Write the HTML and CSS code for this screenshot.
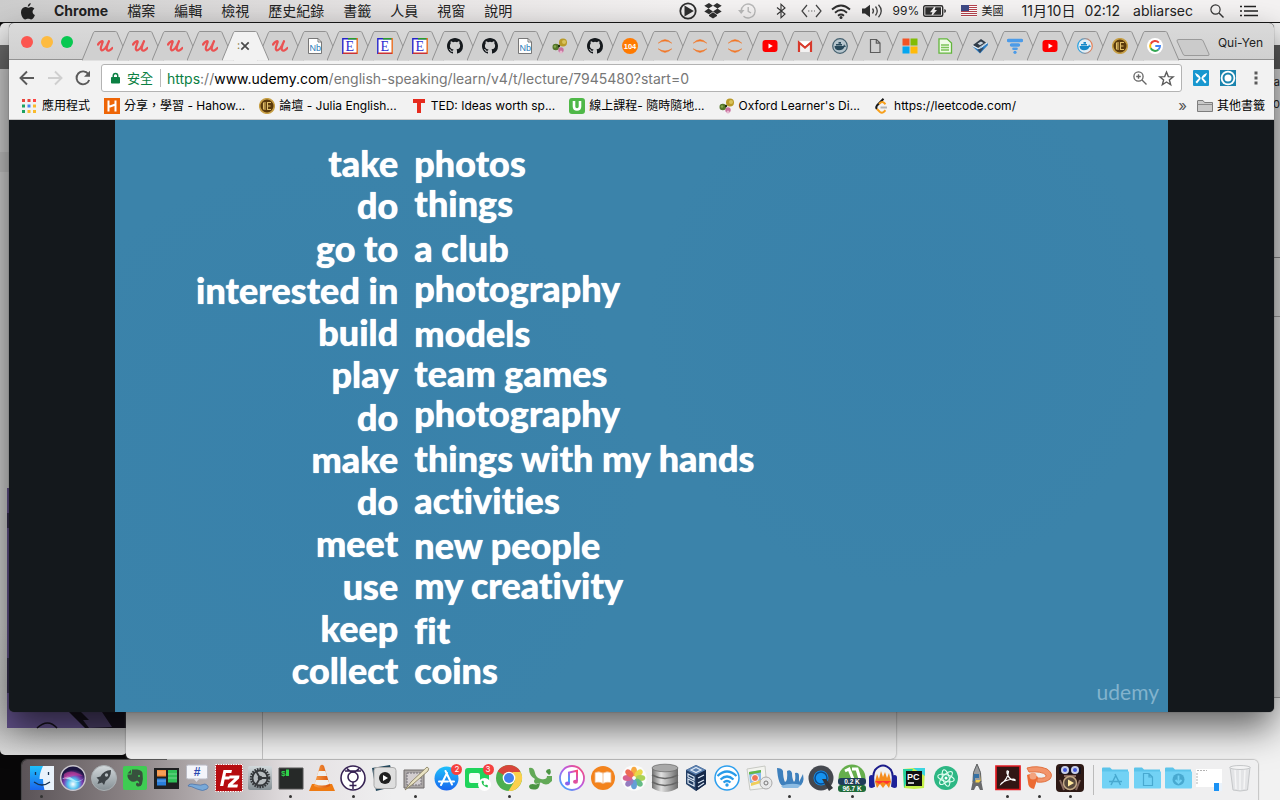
FILE: index.html
```html
<!DOCTYPE html>
<html lang="zh-Hant">
<head>
<meta charset="utf-8">
<title>Chrome</title>
<link rel="stylesheet" href="styles.css">
</head>
<body>
<svg class="defs" aria-hidden="true">
  <defs>
    <linearGradient id="gCone" x1="0" x2="1"><stop offset="0" stop-color="#f9a04a"/><stop offset="1" stop-color="#d9540a"/></linearGradient>
    <linearGradient id="gBlue" x1="0" x2="0" y1="0" y2="1"><stop offset="0" stop-color="#1ec0fb"/><stop offset="1" stop-color="#1a66ee"/></linearGradient>
    <linearGradient id="gGrey" x1="0" x2="0" y1="0" y2="1"><stop offset="0" stop-color="#d3d9dc"/><stop offset="1" stop-color="#858f94"/></linearGradient>
    <linearGradient id="gDisk" x1="0" x2="1"><stop offset="0" stop-color="#6f6f6f"/><stop offset=".35" stop-color="#e2e2e2"/><stop offset="1" stop-color="#6a6a6a"/></linearGradient>
    <linearGradient id="gTunes" x1="0" x2="1" y1="1" y2="0"><stop offset="0" stop-color="#28b8ff"/><stop offset=".5" stop-color="#b45bea"/><stop offset="1" stop-color="#ff4a70"/></linearGradient>
    <linearGradient id="gWhale" x1="0" x2="1"><stop offset="0" stop-color="#21a3e8"/><stop offset="1" stop-color="#ef8154"/></linearGradient>
    <radialGradient id="gSiri" cx=".5" cy=".75" r=".7"><stop offset="0" stop-color="#fff"/><stop offset=".3" stop-color="#4fc3f0"/><stop offset=".55" stop-color="#7a3cae"/><stop offset=".85" stop-color="#1b1440"/></radialGradient>
  </defs>
</svg>
<svg class="symbols" aria-hidden="true">
  <symbol id="tab" viewBox="0 0 47 30"><path d="M0 29.500L11.500 1.500Q12 .5 13 .5H33.500Q34.500 .5 35 1.500L47 29.500" stroke="#929292"/></symbol>
  <symbol id="f-u" viewBox="0 0 16 16"><path d="M1 6.500C2.500 4.500 4.500 3 5.500 3.200C6.500 3.500 3.500 8.500 3.800 11C4 13.500 7.500 12.500 10 7.500L12 3.200M12 3.200C10.500 6.500 9.200 10.500 10 12C11 13.500 13.500 12.500 15.500 10" fill="none" stroke="#ea5252" stroke-width="2.200" stroke-linecap="round"/></symbol>
  <symbol id="f-nb" viewBox="0 0 16 16"><path d="M1.500 .5H11L14.500 4V15.500H1.500Z" fill="#fff" stroke="#777"/><path d="M11 .5V4H14.500" fill="none" stroke="#777"/><text x="2.500" y="12.500" font-size="9" class="glyph" fill="#2b7bb9">Nb</text></symbol>
  <symbol id="f-e" viewBox="0 0 16 16"><path d="M0 0H16V16H0Z" fill="#fff"/><path d="M.8 16V.8H15" fill="none" stroke="#2323c8" stroke-width="1.400"/><path d="M6 .8H15" stroke="#2aa02a" stroke-width="1.400"/><path d="M15.200 0V16" stroke="#e86a1c" stroke-width="1.400"/><path d="M1 15.200H15" stroke="#c33" stroke-width="1.400"/><text x="3.500" y="13" font-size="14" font-family="Liberation Serif" fill="#2b2bd0">E</text></symbol>
  <symbol id="f-gh" viewBox="0 0 16 16"><path fill="#15191d" d="M8 0C3.580 0 0 3.580 0 8c0 3.540 2.290 6.530 5.470 7.590.4.070.55-.17.55-.38 0-.19-.01-.82-.01-1.490-2.010.37-2.530-.49-2.690-.94-.09-.23-.48-.94-.82-1.130-.28-.15-.68-.52-.01-.53.63-.01 1.080.58 1.230.82.72 1.210 1.870.87 2.330.66.07-.52.280-.87.510-1.070-1.780-.2-3.640-.89-3.640-3.950 0-.87.310-1.590.82-2.150-.08-.2-.36-1.020.08-2.120 0 0 .67-.21 2.200.82a7.600 7.600 0 0 1 4 0c1.530-1.040 2.200-.82 2.200-.82.440 1.100.16 1.920.08 2.120.51.560.82 1.270.82 2.150 0 3.070-1.870 3.750-3.650 3.950.29.250.54.730.54 1.480 0 1.070-.01 1.930-.01 2.200 0 .21.15.46.55.38A8 8 0 0 0 16 8c0-4.420-3.580-8-8-8Z"/></symbol>
  <symbol id="f-ox" viewBox="0 0 16 16"><circle cx="11" cy="4.500" r="4" fill="#b99a28"/><circle cx="12" cy="4" r="2" fill="#d9c25c"/><circle cx="3.800" cy="9" r="3.300" fill="#55762a"/><circle cx="3" cy="8.500" r="1.300" fill="#87a84d"/><circle cx="9" cy="12" r="2.700" fill="#c86f9d"/><circle cx="9" cy="14" r="1.500" fill="#e6b7cf"/><circle cx="7" cy="8" r="1.200" fill="#233010"/></symbol>
  <symbol id="f-104" viewBox="0 0 16 16"><circle cx="8" cy="8" r="8" fill="#ff7a00"/><text x="8" y="10.800" font-size="7.500" font-weight="900" text-anchor="middle" class="glyph" fill="#fff">104</text></symbol>
  <symbol id="f-ju" viewBox="0 0 16 16"><path d="M1.200 5.200Q8-2 14.800 5.200Q8 1 1.200 5.200ZM1.200 10.800Q8 18 14.800 10.800Q8 15 1.200 10.800Z" fill="#f37726" stroke="#f37726" stroke-width=".5"/></symbol>
  <symbol id="f-yt" viewBox="0 0 16 16"><rect y="2" x=".5" width="15" height="12" rx="3" fill="#f00"/><path d="M6.500 5.500V10.500L10.800 8Z" fill="#fff"/></symbol>
  <symbol id="f-gm" viewBox="0 0 16 16"><path d="M1 3H15V14H1Z" fill="#f2f2f2"/><path d="M2 14V4.500L8 9.500L14 4.500V14" fill="none" stroke="#d8392b" stroke-width="2.200"/><path d="M3 3.500L8 8L13 3.500Z" fill="#fff"/></symbol>
  <symbol id="whale" viewBox="0 0 16 16"><path d="M2.500 8H11Q12 8 12 6.300Q12.800 7 12.900 7.700Q13.800 7.600 14.200 8Q13.500 9 12.400 9Q11 12.300 7 12.300Q2.800 12.300 2.500 8ZM4 6H10V7.500H4ZM6.500 4H9V5.700H6.500Z"/></symbol>
  <symbol id="f-dk" viewBox="0 0 16 16"><circle cx="8" cy="8" r="7.300" fill="#b6c5cd" stroke="#44606f" stroke-width="1.200"/><use href="#whale" fill="#27485a"/></symbol>
  <symbol id="f-dc" viewBox="0 0 16 16"><circle cx="8" cy="8" r="7.300" fill="#e3eef5" stroke="url(#gWhale)" stroke-width="1.200"/><use href="#whale" fill="#1689c9"/></symbol>
  <symbol id="f-doc" viewBox="0 0 16 16"><path d="M3.500 1.500H9.500L13 5V14.500H3.500ZM9.300 1.500V5.200H13" fill="none" stroke="#5c5c5c" stroke-width="1.200"/></symbol>
  <symbol id="f-ms" viewBox="0 0 16 16"><path d="M.5 .5H7.500V7.500H.5Z" fill="#f35325"/><path d="M8.500 .5H15.500V7.500H8.500Z" fill="#81bc06"/><path d="M.5 8.500H7.500V15.500H.5Z" fill="#05a6f0"/><path d="M8.500 8.500H15.500V15.500H8.500Z" fill="#ffba08"/></symbol>
  <symbol id="f-gd" viewBox="0 0 16 16"><path d="M2 .8H10L14.500 5V15.200H2Z" fill="#f0fbe8" stroke="#62b53c" stroke-width="1.300"/><path d="M4 7H12M4 9.500H12M4 12H12" stroke="#7cc45a" stroke-width="1.300"/></symbol>
  <symbol id="f-ha" viewBox="0 0 16 16"><path d="M1 7L9 1L14 4.500L6 10Z" fill="#2f3b48"/><path d="M5.500 5.500L9 3.500L11.500 5L8 7.200Z" fill="#c9d3dc"/><path d="M0 8L6 11L15.500 4.500L16 7L8 15.500Z" fill="#2f7fc4"/><path d="M.5 7.800L7 11L15.500 4.800" fill="none" stroke="#e6edf3" stroke-width="1"/><path d="M5.500 11.500L12 9.500L8 15Z" fill="#334a62"/></symbol>
  <symbol id="f-tf" viewBox="0 0 16 16"><path d="M1.500 2.500H14.500M4.500 7H11.500" stroke="#4c9be8" stroke-width="3.400" stroke-linecap="round"/><path d="M6.500 10.700H9.500" stroke="#4c9be8" stroke-width="2.600" stroke-linecap="round"/><circle cx="8" cy="14.300" r="1.600" fill="#4c9be8"/></symbol>
  <symbol id="f-je" viewBox="0 0 16 16"><circle cx="8" cy="8" r="7.300" fill="#5a3a0c" stroke="#c79f45" stroke-width="1.600"/><path d="M6 4V12M4.500 4.500V11.500M8.500 4V12M8.500 4.500H12M8.500 8H11.500M8.500 11.500H12" stroke="#e3c16a" stroke-width="1.100"/></symbol>
  <symbol id="f-g" viewBox="0 0 16 16"><circle cx="8" cy="8" r="8" fill="#fff"/><path d="M11.800 4.600A5 5 0 0 0 3.700 5.700" fill="none" stroke="#ea4335" stroke-width="2"/><path d="M3.700 5.700A5 5 0 0 0 3.700 10.300" fill="none" stroke="#fbbc05" stroke-width="2"/><path d="M3.700 10.300A5 5 0 0 0 11.300 11.700" fill="none" stroke="#34a853" stroke-width="2"/><path d="M11.300 11.700A5 5 0 0 0 13 8H8.300" fill="none" stroke="#4285f4" stroke-width="2"/></symbol>
  <symbol id="folder" viewBox="0 0 28 28"><path d="M1 4.500Q1 3.500 2 3.500H9L11 5.500H27V10H1Z" fill="#5cc4ea"/><path d="M1 7.500H28V23.500Q28 24.500 27 24.500H2Q1 24.500 1 23.500Z" fill="#72d2f5"/></symbol>
</svg>

<div class="desktop">
  <header class="menubar">
    <nav class="menus">
      <svg class="apple" viewBox="0 0 14 17" width="14" height="17"><path fill="#222" d="M9.700 0C9.800 1.500 8.600 3.600 6.800 3.700C6.600 2.100 8.200.2 9.700 0ZM7.100 4.700C7.800 4.700 8.700 3.900 10.100 3.900C11.500 3.900 12.700 4.600 13.400 5.700C10.700 7.300 11.100 10.900 13.900 12C13.300 13.800 11.800 16.400 10.200 16.500C9 16.500 8.600 15.800 7.200 15.800C5.700 15.800 5.300 16.500 4.200 16.500C2.100 16.400 0 12.500 0 9.300C0 6 2.100 4.100 4.100 4C5.400 4 6.500 4.700 7.100 4.700Z"/></svg>
      <a href="#" class="app">Chrome</a><a href="#">檔案</a><a href="#">編輯</a><a href="#">檢視</a><a href="#">歷史紀錄</a><a href="#">書籤</a><a href="#">人員</a><a href="#">視窗</a><a href="#">說明</a>
    </nav>
    <div class="status">
      <svg class="play" viewBox="0 0 18 18" width="18" height="18"><circle cx="9" cy="9" r="7.700" fill="none" stroke="#2f2f2f" stroke-width="1.800"/><path d="M5.500 3.500V14.500L14.800 9Z" fill="#2f2f2f"/></svg>
      <svg class="dropbox" viewBox="0 0 18 16" width="18" height="16"><path fill="#2f2f2f" d="M5 0L9 2.800L4.500 5.600L.3 2.800ZM13 0L17.700 2.800L13.500 5.600L9 2.800ZM.3 8.400L4.500 5.600L9 8.400L5 11.200ZM17.700 8.400L13.500 5.600L9 8.400L13 11.200ZM9 9.300L13 12.100V13L9 15.500L5 13V12.100Z"/></svg>
      <svg class="tm" viewBox="0 0 18 16" width="18" height="16"><path d="M3.200 8A7 7 0 1 1 5.500 13.200M10.200 4V8.300L13 10" fill="none" stroke="#b9b9b9" stroke-width="1.400"/><path d="M0 7H6.500L3.200 11Z" fill="#b9b9b9"/></svg>
      <svg class="bt" viewBox="0 0 10 16" width="10" height="16"><path d="M1 4.500L9 11L5 14.800V1.200L9 5L1 11.500" fill="none" stroke="#333" stroke-width="1.100"/></svg>
      <svg class="net" viewBox="0 0 21 12" width="21" height="12"><path d="M6 0L1 6L6 12M15 0L20 6L15 12" fill="none" stroke="#444" stroke-width="1.200"/><path d="M7 6H14" stroke="#999" stroke-dasharray="1.400 1.600" stroke-width="1.400"/></svg>
      <svg class="wifi" viewBox="0 0 20 15" width="20" height="15"><path d="M1 5.500Q10-2.500 19 5.500M4 8.700Q10 3.500 16 8.700M7 11.700Q10 9.300 13 11.700" fill="none" stroke="#2f2f2f" stroke-width="1.900"/><circle cx="10" cy="13.500" r="1.500" fill="#2f2f2f"/></svg>
      <svg class="vol" viewBox="0 0 21 14" width="21" height="14"><path d="M0 4.500H3L8 .8V13.200L3 9.500H0Z" fill="#2f2f2f"/><path d="M10.500 4.500Q12.500 7 10.500 9.500M13.500 2.500Q17 7 13.500 11.500M16.500 .8Q22 7 16.500 13.200" fill="none" stroke="#444" stroke-width="1.300"/></svg>
      <span class="pct">99%</span>
      <svg class="bat" viewBox="0 0 23 12" width="23" height="12"><rect x=".7" y=".7" width="19" height="10.600" rx="1.500" fill="none" stroke="#2f2f2f" stroke-width="1.400"/><path d="M21.300 4V8Q23 7.500 23 6T21.300 4Z" fill="#2f2f2f"/><path d="M2.300 2.300H11L7 7.200H9.500L8.500 9.700H2.300ZM18 2.300H12.500L11.500 5H14L10 9.700H18Z" fill="#2f2f2f"/></svg>
      <svg class="flag" viewBox="0 0 16 12" width="16" height="12"><path fill="#fff" d="M0 0H16V12H0Z"/><path d="M0 .5H16M0 2.500H16M0 4.500H16M0 6.500H16M0 8.500H16M0 10.500H16" stroke="#b5424d"/><path fill="#3f4a86" d="M0 0H8V6H0Z"/></svg>
      <span class="ime">美國</span>
      <span class="date">11月10日</span><span class="time">02:12</span>
      <span class="user">abliarsec</span>
      <svg class="search" viewBox="0 0 14 14" width="14" height="14"><circle cx="5.500" cy="5.500" r="4.600" fill="none" stroke="#333" stroke-width="1.200"/><path d="M9 9L13.500 13.500" stroke="#333" stroke-width="1.400"/></svg>
      <svg class="list" viewBox="0 0 18 12" width="18" height="12"><path d="M4 1.500H16M4 6H18M4 10.500H18M0 1.500H2M0 6H2M0 10.500H2" stroke="#222" stroke-width="1.700"/></svg>
    </div>
  </header>

  <div class="back-left">
    <svg class="photo" viewBox="0 0 119 240" preserveAspectRatio="none"><path d="M0 0H119V240H0Z" fill="#63528c"/><path d="M0 25H2V40H0ZM0 170H3V205H0Z" fill="#37304f"/><path d="M62 224H119V240H78Z" fill="#15111c"/><path d="M74 224H95L105 239L82 240L76 232H82Z" fill="#4b3f68"/><path d="M30 240Q41 230 50 240" fill="none" stroke="#16121c" stroke-width="1.500"/></svg>
  </div>
  <div class="back-right"><span class="clip">a</span><span class="clip">0</span></div>
  <div class="back-mid"></div>

  <main class="window">
    <div class="tabstrip">
      <div class="lights"><button aria-label="Close" class="red"></button><button aria-label="Minimise" class="amber"></button><button aria-label="Zoom" class="green"></button></div>
      <div class="tabs">
        <button class="tab"><svg class="shape"><use href="#tab"/></svg><svg class="fav"><use href="#f-u"/></svg></button>
        <button class="tab"><svg class="shape"><use href="#tab"/></svg><svg class="fav"><use href="#f-u"/></svg></button>
        <button class="tab"><svg class="shape"><use href="#tab"/></svg><svg class="fav"><use href="#f-u"/></svg></button>
        <button class="tab"><svg class="shape"><use href="#tab"/></svg><svg class="fav"><use href="#f-u"/></svg></button>
        <button class="tab active"><svg class="shape"><use href="#tab"/></svg><span class="cut">:</span><svg class="x" viewBox="0 0 8 8"><path d="M.3 .3L7.700 7.700M7.700 .3L.3 7.700" stroke="#4a4a4a" stroke-width="1.700"/></svg></button>
        <button class="tab"><svg class="shape"><use href="#tab"/></svg><svg class="fav"><use href="#f-u"/></svg></button>
        <button class="tab"><svg class="shape"><use href="#tab"/></svg><svg class="fav"><use href="#f-nb"/></svg></button>
        <button class="tab"><svg class="shape"><use href="#tab"/></svg><svg class="fav"><use href="#f-e"/></svg></button>
        <button class="tab"><svg class="shape"><use href="#tab"/></svg><svg class="fav"><use href="#f-e"/></svg></button>
        <button class="tab"><svg class="shape"><use href="#tab"/></svg><svg class="fav"><use href="#f-e"/></svg></button>
        <button class="tab"><svg class="shape"><use href="#tab"/></svg><svg class="fav"><use href="#f-gh"/></svg></button>
        <button class="tab"><svg class="shape"><use href="#tab"/></svg><svg class="fav"><use href="#f-gh"/></svg></button>
        <button class="tab"><svg class="shape"><use href="#tab"/></svg><svg class="fav"><use href="#f-nb"/></svg></button>
        <button class="tab"><svg class="shape"><use href="#tab"/></svg><svg class="fav"><use href="#f-ox"/></svg></button>
        <button class="tab"><svg class="shape"><use href="#tab"/></svg><svg class="fav"><use href="#f-gh"/></svg></button>
        <button class="tab"><svg class="shape"><use href="#tab"/></svg><svg class="fav"><use href="#f-104"/></svg></button>
        <button class="tab"><svg class="shape"><use href="#tab"/></svg><svg class="fav"><use href="#f-ju"/></svg></button>
        <button class="tab"><svg class="shape"><use href="#tab"/></svg><svg class="fav"><use href="#f-ju"/></svg></button>
        <button class="tab"><svg class="shape"><use href="#tab"/></svg><svg class="fav"><use href="#f-ju"/></svg></button>
        <button class="tab"><svg class="shape"><use href="#tab"/></svg><svg class="fav"><use href="#f-yt"/></svg></button>
        <button class="tab"><svg class="shape"><use href="#tab"/></svg><svg class="fav"><use href="#f-gm"/></svg></button>
        <button class="tab"><svg class="shape"><use href="#tab"/></svg><svg class="fav"><use href="#f-dk"/></svg></button>
        <button class="tab"><svg class="shape"><use href="#tab"/></svg><svg class="fav"><use href="#f-doc"/></svg></button>
        <button class="tab"><svg class="shape"><use href="#tab"/></svg><svg class="fav"><use href="#f-ms"/></svg></button>
        <button class="tab"><svg class="shape"><use href="#tab"/></svg><svg class="fav"><use href="#f-gd"/></svg></button>
        <button class="tab"><svg class="shape"><use href="#tab"/></svg><svg class="fav"><use href="#f-ha"/></svg></button>
        <button class="tab"><svg class="shape"><use href="#tab"/></svg><svg class="fav"><use href="#f-tf"/></svg></button>
        <button class="tab"><svg class="shape"><use href="#tab"/></svg><svg class="fav"><use href="#f-yt"/></svg></button>
        <button class="tab"><svg class="shape"><use href="#tab"/></svg><svg class="fav"><use href="#f-dc"/></svg></button>
        <button class="tab"><svg class="shape"><use href="#tab"/></svg><svg class="fav"><use href="#f-je"/></svg></button>
        <button class="tab"><svg class="shape"><use href="#tab"/></svg><svg class="fav"><use href="#f-g"/></svg></button>
      </div>
      <button class="newtab" aria-label="New tab"><svg viewBox="0 0 34 17" width="34" height="17"><path d="M3 .5H25Q26.500 .5 27.200 2L33 15Q33.500 16.500 32 16.500H9Q7.500 16.500 7 15L1 2Q.5 .5 3 .5Z" fill="#cbcbcb" stroke="#9a9a9a"/></svg></button>
      <span class="profile">Qui-Yen</span>
    </div>

    <div class="toolbar">
      <button aria-label="Back"><svg viewBox="0 0 16 16" width="16" height="16"><path d="M15 8H2M8 1.500L1.500 8L8 14.500" fill="none" stroke="#5a5a5a" stroke-width="1.900"/></svg></button>
      <button aria-label="Forward"><svg viewBox="0 0 16 16" width="16" height="16"><path d="M1 8H14M8 1.500L14.500 8L8 14.500" fill="none" stroke="#cfcfcf" stroke-width="1.900"/></svg></button>
      <button aria-label="Reload"><svg viewBox="0 0 16 16" width="16" height="16"><path d="M13.300 4A6.500 6.500 0 1 0 14.200 10" fill="none" stroke="#5a5a5a" stroke-width="1.900"/><path d="M15 .8V6.800H9Z" fill="#5a5a5a"/></svg></button>
      <label class="omnibox">
        <svg viewBox="0 0 10 12" width="9" height="12"><path d="M2.500 5.500V3.500Q2.500 1 5 1T7.500 3.500V5.500" fill="none" stroke="#0b8043" stroke-width="1.600"/><rect y="4.800" width="10" height="7.200" rx="1" fill="#0b8043"/></svg>
        <span class="secure">安全</span>
        <span class="origin"><span class="scheme">https</span><span class="sep">://</span>www.udemy.com</span><input type="text" aria-label="Address" value="/english-speaking/learn/v4/t/lecture/7945480?start=0">
        <svg class="mag" viewBox="0 0 14 14" width="14" height="14"><circle cx="5.500" cy="5.500" r="4.600" fill="none" stroke="#666" stroke-width="1.300"/><path d="M9 9L13.500 13.500M3.200 5.500H7.800M5.500 3.200V7.800" stroke="#666" stroke-width="1.400"/></svg>
        <svg viewBox="0 0 14 14" width="15" height="15"><path d="M7 1L8.700 5.200L13.200 5.500L9.700 8.300L10.900 12.800L7 10.300L3.100 12.800L4.300 8.300L.8 5.500L5.300 5.200Z" fill="none" stroke="#5a5a5a" stroke-width="1.300"/></svg>
      </label>
      <button aria-label="Extension" class="ext"><svg viewBox="0 0 16 16" width="16" height="16"><rect width="16" height="16" rx="1" fill="#1897cf"/><path d="M2 3Q6 4 7.500 7.500V9L4 13.500L2.500 12L6 8Q3 7 2 3ZM14 3Q10 4 8.500 7.500V9L12 13.500L13.500 12L10 8Q13 7 14 3Z" fill="#fff"/></svg></button>
      <button aria-label="Extension" class="ext"><svg viewBox="0 0 16 16" width="16" height="16"><rect width="16" height="16" fill="#1b84ae"/><circle cx="8" cy="8" r="7.300" fill="#fff"/><circle cx="8" cy="8" r="4.500" fill="none" stroke="#1b84ae" stroke-width="2"/></svg></button>
      <button aria-label="Menu" class="kebab"><svg viewBox="0 0 4 14" width="4" height="14"><path d="M.5 .5H3.500V3.500H.5ZM.5 5.500H3.500V8.500H.5ZM.5 10.500H3.500V13.500H.5Z" fill="#5a5a5a"/></svg></button>
    </div>

    <nav class="bookmarks">
      <a href="#" class="bm apps"><svg viewBox="0 0 14 14" width="14" height="14"><path fill="#e8453c" d="M0 0H3V3H0ZM5.500 0H8.500V3H5.500Z"/><path fill="#f44" d="M11 0H14V3H11Z"/><path fill="#1ca261" d="M0 5.500H3V8.500H0ZM0 11H3V14H0Z"/><path fill="#4285f4" d="M5.500 5.500H8.500V8.500H5.500Z"/><path fill="#f9bb2d" d="M11 5.500H14V8.500H11ZM5.500 11H8.500V14H5.500ZM11 11H14V14H11Z"/></svg>應用程式</a>
      <a href="#" class="bm"><svg viewBox="0 0 16 16" width="16" height="16"><path fill="#ee6506" d="M0 0H16V16H0Z"/><path d="M4.500 2.500V13.500M11.500 2.500V13.500M4.500 9L11.500 6.500" stroke="#fff" stroke-width="2"/></svg>分享，學習 - Hahow...</a>
      <a href="#" class="bm"><svg width="16" height="16"><use href="#f-je"/></svg>論壇 - Julia English...</a>
      <a href="#" class="bm"><svg viewBox="0 0 16 16" width="16" height="16"><path fill="#e62b1e" d="M2 1H14V5H10V15H6V5H2Z"/></svg>TED: Ideas worth sp...</a>
      <a href="#" class="bm"><svg viewBox="0 0 16 16" width="16" height="16"><rect width="16" height="16" rx="3" fill="#4fb848"/><path d="M5 3V8.500Q5 11.500 8 11.500T11 8.500V3" fill="none" stroke="#fff" stroke-width="2.600"/></svg>線上課程- 隨時隨地...</a>
      <a href="#" class="bm"><svg width="16" height="16"><use href="#f-ox"/></svg>Oxford Learner's Di...</a>
      <a href="#" class="bm"><svg viewBox="0 0 16 16" width="16" height="16"><path d="M9.500 .8L3 7.500Q1.500 9.500 3 11" fill="none" stroke="#1a1a1a" stroke-width="2"/><path d="M3 11L6 14Q7.800 15.300 9.700 14L11.500 12.300M5 6L7 4.300Q8.500 3.500 10 4.800L11.500 6.300" fill="none" stroke="#f7a01c" stroke-width="2"/><path d="M6.500 9.500H13" stroke="#b3b3b3" stroke-width="1.800"/></svg>https://leetcode.com/</a>
      <span class="more">»</span>
      <a href="#" class="bm other"><svg viewBox="0 0 16 12" width="16" height="12"><path d="M.5 11.500V1Q.5 .5 1 .5H6L7.500 2.500H15.500V11.500Z" fill="#c9c9c9" stroke="#7d7d7d"/><path d="M.5 4.500H15.500" stroke="#8a8a8a"/></svg>其他書籤</a>
    </nav>

    <section class="page">
      <div class="video">
        <div class="slide">
          <ul class="verbs"><li>take</li><li>do</li><li>go to</li><li>interested in</li><li>build</li><li>play</li><li>do</li><li>make</li><li>do</li><li>meet</li><li>use</li><li>keep</li><li>collect</li></ul>
          <ul class="objects"><li class="tight">photos</li><li class="loose">things</li><li class="tight">a club</li><li class="loose">photography</li><li class="tight">models</li><li class="tight">team games</li><li class="loose">photography</li><li>things with my hands</li><li class="loose">activities</li><li class="tight">new people</li><li class="loose">my creativity</li><li class="tight">fit</li><li class="tight">coins</li></ul>
        </div>
        <span class="mark">udemy</span>
      </div>
    </section>
  </main>

  <footer class="dock">
    <a href="#" class="run" title="Finder"><svg viewBox="0 0 28 28"><path d="M2 2H26V26H2Z" fill="#e9f2fb"/><path d="M2 2H15Q11.500 9 11.500 15H15Q15 21 16.500 26H2Z" fill="url(#gBlue)"/><path d="M7.500 8V11M20.500 8V11M6 18Q14 24 22 18" fill="none" stroke="#163152" stroke-width="1.300"/></svg></a>
    <a href="#" title="Siri"><svg viewBox="0 0 28 28"><circle cx="14" cy="14" r="12.300" fill="url(#gSiri)" stroke="#c9c6cc" stroke-width="1.400"/><path d="M3 15Q9 10 14 15T25 14Q20 20 14 17T3 15Z" fill="#b7f3ff" opacity=".8"/><path d="M5 10Q12 4 24 12Q14 10 5 16Z" fill="#e13d97" opacity=".5"/></svg></a>
    <a href="#" title="Launchpad"><svg viewBox="0 0 28 28"><circle cx="14" cy="14" r="12.500" fill="url(#gGrey)" stroke="#aab0b3"/><path d="M21 6Q14 6 10.500 12.500L6.500 13.500L9 16L7.500 20L12 18.500L14 21L15.500 17Q21 14 21 6Z" fill="#3d4347"/><circle cx="16.500" cy="11" r="1.700" fill="#b5bcc0"/></svg></a>
    <a href="#" title="Evernote"><svg viewBox="0 0 28 28"><rect x="2" y="2" width="24" height="24" rx="2" fill="#3fcc53"/><path d="M11 5.500H16Q21 6 21.500 9Q22.500 15 21 20Q20 23 16.500 22.500Q14 21 15.500 19Q17 18 18 20Q19 18 16 16.500Q12 19 9 16.500Q6 14 6.500 10.500H10.500Z" fill="#37513d"/><path d="M6.500 9.500L10 5.800V9.500Z" fill="#37513d"/><circle cx="18" cy="12" r="1" fill="#3fcc53"/></svg></a>
    <a href="#" title="Trello"><svg viewBox="0 0 28 28"><path d="M2 4H27V25H2Z" fill="#1f1f21"/><path d="M5 6H14V12.500H5Z" fill="#f38a36"/><path d="M5 14.500H14V21.500H5Z" fill="#297edc"/><path d="M16 6H25V18.500H16Z" fill="#2fbf57"/><path d="M5 8H14M5 10H14M5 17H14M16 10H25M16 14H25" stroke="#fff" stroke-opacity=".35"/></svg></a>
    <a href="#" title="Channel"><svg viewBox="0 0 28 28"><rect x="3.500" y="1" width="21" height="14" rx="1.500" fill="#f4f5fa" stroke="#b9bac4"/><path d="M11 15L13.500 18L16 15Z" fill="#dcdde6"/><text x="14" y="12" font-size="12" font-weight="700" text-anchor="middle" class="glyph" fill="#2848b0">#</text><path d="M5 22Q6 19 12 20.500T22 20Q27 22 24 25Q20 28 14 25T5 22Z" fill="#78a9d8" stroke="#456fa8" stroke-width=".7"/></svg></a>
    <a href="#" title="FileZilla"><svg viewBox="0 0 28 28"><path d="M.5 .5H27.500V27.500H.5Z" fill="#b60c10" stroke="#fff" stroke-dasharray="1.500 1"/><path d="M5 22L8.500 6H17L16.300 9H11L10.300 12.500H15L14.300 15.500H9.600L8.300 22ZM14.500 11.500H24.500L24 14.500L17.500 20.500H23L22.300 23.500H12.500L13.200 20.300L19.500 14.500H14Z" fill="#fff"/></svg></a>
    <a href="#" title="Preferences"><svg viewBox="0 0 28 28"><rect x="2" y="2" width="24" height="24" rx="2" fill="url(#gGrey)"/><circle cx="14" cy="14" r="9" fill="none" stroke="#34373a" stroke-width="2.500" stroke-dasharray="1.600 1"/><circle cx="14" cy="14" r="7.500" fill="#b7bcbf" stroke="#34373a" stroke-width="1.800"/><path d="M14 14H21M14 14L10.500 8M14 14L10.500 20" stroke="#34373a" stroke-width="1.800"/><circle cx="14" cy="14" r="2.300" fill="#34373a"/></svg></a>
    <a href="#" class="run" title="Terminal"><svg viewBox="0 0 28 28"><path d="M2 4H26V25H2Z" fill="#262928" stroke="#555"/><text x="4" y="12" font-size="8" font-weight="700" class="mono" fill="#2ed34b">$</text><path d="M9 5.500H12V12H9Z" fill="#2ed34b"/></svg></a>
    <a href="#" title="VLC"><svg viewBox="0 0 28 28"><path d="M4 20H24L27 27H1Z" fill="#ee7a12"/><path d="M12 2Q14-.5 16 2L22 22Q14 26 6 22Z" fill="url(#gCone)"/><path d="M10.600 7H17.400L19 12H9ZM7.800 16H20.200L21.400 20Q14 23 6.600 20Z" fill="#eee"/></svg></a>
    <a href="#" class="run" title="Hermes"><svg viewBox="0 0 28 28"><circle cx="14" cy="14" r="12" fill="#fff" stroke="#362253" stroke-width="1.600"/><circle cx="14" cy="13" r="5" fill="none" stroke="#362253" stroke-width="1.600"/><path d="M8 4.500Q14 11.500 20 4.500M14 18V25M10.500 21.500H17.500M6 7H22" fill="none" stroke="#362253" stroke-width="1.500"/></svg></a>
    <a href="#" title="Player"><svg viewBox="0 0 28 28"><path d="M2 4L20 1L26 22L6 27Z" fill="#25485c"/><rect x="4" y="3.500" width="22" height="21" rx="3" fill="#dedede" stroke="#aaa"/><circle cx="15" cy="14" r="6" fill="#202020"/><path d="M13 11V17L18 14Z" fill="#fff"/></svg></a>
    <a href="#" class="run" title="Screenshot"><svg viewBox="0 0 28 28"><path d="M2 6H22V24H2Z" fill="#aaa6a5" stroke="#6f6b6b"/><path d="M5 9H19V21H5Z" fill="#d3ced0" stroke="#77737a" stroke-dasharray="2 1"/><path d="M3 26L9 18L25 3Q28 4 26 7L11 20Z" fill="#e8e1c2" stroke="#81785a" stroke-width=".8"/></svg></a>
    <a href="#" title="App Store"><svg viewBox="0 0 28 28"><circle cx="13.500" cy="14.500" r="12" fill="url(#gBlue)"/><path d="M8 21L14 9M12.500 7L19 20.500M6 17.500H15M17 17.500H21" stroke="#fff" stroke-width="2" stroke-linecap="round"/></svg><span class="badge">2</span></a>
    <a href="#" title="FaceTime"><svg viewBox="0 0 28 28"><rect x="1" y="4" width="24" height="20" rx="3" fill="#1fd45b"/><rect x="5" y="9" width="11" height="10" rx="2" fill="#f4fff6"/><circle cx="20.500" cy="20.500" r="6.500" fill="#fff"/><path d="M17.500 17.500Q18 22 23.500 23.500L24 21.500L22 20.500L21 21.500Q20 21 19.500 19.500L20 18L19 16.500Z" fill="#22c452"/></svg><span class="badge">3</span></a>
    <a href="#" class="run" title="Chrome"><svg viewBox="0 0 28 28"><circle cx="14" cy="14" r="13" fill="#4caf50"/><path d="M14 14L2.700 7.500A13 13 0 0 1 25.300 7.500Z" fill="#d8453a"/><path d="M25.300 7.500A13 13 0 0 1 13.500 27L19.600 17Q21 12 17 8H25.300Z" fill="#fbd04b"/><circle cx="14" cy="14" r="6.300" fill="#fff"/><circle cx="14" cy="14" r="5" fill="#437fee"/></svg></a>
    <a href="#" title="Excel"><svg viewBox="0 0 28 28"><path d="M3 4Q8 3 9 9Q10 14 15 15Q21 16 21 12H26V17Q21 23 15 18.500Q12 20 9 19.500Q7 17 9 15Q3 12 3 4Z" fill="#62a957"/><path d="M3 22Q4 19 10 20.500L14 19Q13 26 9 25.500Q3 26 3 22Z" fill="#4c9544"/><path d="M20 8Q20 5 24 5Q26 9 23 11Z" fill="#4c9544"/></svg></a>
    <a href="#" title="iTunes"><svg viewBox="0 0 28 28"><circle cx="14" cy="14" r="12" fill="#fff" stroke="url(#gTunes)" stroke-width="1.800"/><path d="M11 19V8.500L19 6.800V17" fill="none" stroke="url(#gTunes)" stroke-width="2"/><ellipse cx="9.500" cy="19.500" rx="2.500" ry="2" fill="#8a63ec"/><ellipse cx="17.500" cy="17.700" rx="2.500" ry="2" fill="#e0509e"/></svg></a>
    <a href="#" title="Books"><svg viewBox="0 0 28 28"><circle cx="14" cy="14" r="12" fill="#f3831d"/><path d="M14 9Q10 7 6 8.500V18.500Q10 17.500 14 19.500Q18 17.500 22 18.500V8.500Q18 7 14 9ZM14 9V19" fill="#fff" stroke="#f0b37e" stroke-width=".8"/></svg></a>
    <a href="#" title="Photos"><svg viewBox="0 0 28 28"><circle cx="14" cy="14" r="12.700" fill="#fbfbfb"/><g opacity=".85"><ellipse cx="14" cy="7.500" rx="3" ry="4.800" fill="#f79a1f"/><ellipse cx="14" cy="7.500" rx="3" ry="4.800" fill="#e4d22a" transform="rotate(45 14 14)"/><ellipse cx="14" cy="7.500" rx="3" ry="4.800" fill="#9ccb3b" transform="rotate(90 14 14)"/><ellipse cx="14" cy="7.500" rx="3" ry="4.800" fill="#4cb073" transform="rotate(135 14 14)"/><ellipse cx="14" cy="7.500" rx="3" ry="4.800" fill="#4a8fd0" transform="rotate(180 14 14)"/><ellipse cx="14" cy="7.500" rx="3" ry="4.800" fill="#8467b5" transform="rotate(225 14 14)"/><ellipse cx="14" cy="7.500" rx="3" ry="4.800" fill="#d3477c" transform="rotate(270 14 14)"/><ellipse cx="14" cy="7.500" rx="3" ry="4.800" fill="#ec5138" transform="rotate(315 14 14)"/></g></svg></a>
    <a href="#" title="Database"><svg viewBox="0 0 28 28"><path d="M1 4V24Q14 32 27 24V4Z" fill="url(#gDisk)"/><ellipse cx="14" cy="4" rx="13" ry="3.800" fill="#a9a9a9" stroke="#666" stroke-width=".7"/><path d="M1 11Q14 18 27 11M1 18Q14 25 27 18" fill="none" stroke="#666" stroke-width="1.500"/></svg></a>
    <a href="#" title="VirtualBox"><svg viewBox="0 0 28 28"><path d="M14 1L24 6V20L14 27L4 20V6Z" fill="#243f66"/><path d="M14 1L24 6L14 11L4 6Z" fill="#5b7fae"/><path d="M14 11L24 6V20L14 27Z" fill="#16294a"/><path d="M6 10L12 13V16L6 13ZM6 15L12 18V22L6 19ZM16 14L22 11M16 19L22 16M16 23L22 19M9 6L14 3.500L19 6L14 8.500Z" fill="none" stroke="#dce8f6" stroke-width="1.200"/></svg></a>
    <a href="#" title="AirPort"><svg viewBox="0 0 28 28"><circle cx="14" cy="14" r="12" fill="#fff" stroke="#2d9fee" stroke-width="1.500"/><path d="M4.500 12Q14 3 23.500 12M7.500 15.500Q14 9.500 20.500 15.500M10.500 18.500Q14 15.500 17.500 18.500" fill="none" stroke="#279be9" stroke-width="2.200"/><circle cx="14" cy="21" r="1.700" fill="#279be9"/></svg></a>
    <a href="#" title="Migration"><svg viewBox="0 0 28 28"><path d="M2 5L20 2L22 24L5 26Z" fill="#f3f4ef" stroke="#c7c9c4"/><path d="M4 8L16 6V17L5 19Z" fill="#87bcf0"/><path d="M4 8L16 6V8.500L4 10.500Z" fill="#62b846"/><path d="M6 19L19 15V18L6 22Z" fill="#f0cf59"/><circle cx="10" cy="14" r="3.500" fill="#ef7355" stroke="#fff"/><circle cx="21" cy="19" r="6" fill="#e8e9ea" stroke="#aaa"/><circle cx="21" cy="19" r="2" fill="none" stroke="#777"/></svg></a>
    <a href="#" class="run" title="Word"><svg viewBox="0 0 28 28"><path d="M1 4Q6 4 7 7Q7 14 9 18Q12 17 11 7Q15 5 16 9Q16 15 18 18Q20 16 19 9Q23 8 23 12V18L27 10Q29 20 23 22H8Q2 22 1 4Z" fill="#3e80bd"/><path d="M5 22Q15 18 25 21L22 24H7Z" fill="#8bbbe3"/></svg></a>
    <a href="#" title="QuickTime"><svg viewBox="0 0 28 28"><circle cx="14" cy="14" r="12.500" fill="#45484f"/><circle cx="14" cy="14" r="7.500" fill="#1593f0"/><circle cx="14" cy="14" r="6" fill="none" stroke="#0c4a8c" stroke-width="1.500"/><path d="M15 15L19 15L26 24L22 27Z" fill="#33363b"/></svg></a>
    <a href="#" class="run" title="Torrent"><svg viewBox="0 0 28 28"><circle cx="14" cy="14" r="13.500" fill="#65ae4c"/><path d="M7 7L11 5L15 15M14 5H19L22 15" fill="none" stroke="#fff" stroke-width="3"/><rect x="0" y="14" width="28" height="7" rx="3" fill="#203d59"/><rect x="0" y="21" width="28" height="7" rx="3" fill="#1e6b3a"/><text x="14" y="20" font-size="6.500" font-weight="700" text-anchor="middle" class="glyph" fill="#fff">0.2 K</text><text x="14" y="27" font-size="6.500" font-weight="700" text-anchor="middle" class="glyph" fill="#fff">96.7 K</text></svg></a>
    <a href="#" title="Audacity"><svg viewBox="0 0 28 28"><path d="M5 23Q3 11 6 6Q14-3 22 6Q25 11 23 23" fill="none" stroke="#1b1c8a" stroke-width="2"/><path d="M6 18L8 10L10 15L12 7L14 13L16 8L18 14L20 9L22 18L20 24L17 20L14 24L11 20L8 24Z" fill="#f58c1d"/><path d="M6 17H22L18 20L14 18L10 20Z" fill="#f33"/><rect x="0" y="11" width="5" height="13" rx="2.500" fill="#1d2199"/><rect x="23" y="11" width="5" height="13" rx="2.500" fill="#1d2199"/></svg></a>
    <a href="#" title="PyCharm"><svg viewBox="0 0 28 28"><path d="M3 5L14 4L25 5L24 24L14 25L4 24Z" fill="#c6f04a"/><path d="M3 5H13L4 24Z" fill="#25d3a0"/><path d="M13 4H25V12Z" fill="#3bd5e0"/><path d="M6 7H22V22H6Z" fill="#111"/><text x="7" y="15.500" font-size="9" font-weight="700" class="glyph" fill="#fff">PC</text><path d="M8 19H14" stroke="#fff" stroke-width="1.500"/></svg></a>
    <a href="#" title="Atom"><svg viewBox="0 0 28 28"><circle cx="14" cy="14" r="12" fill="#2db784"/><g fill="none" stroke="#e2fff2" stroke-width="1.100"><ellipse cx="14" cy="14" rx="3.300" ry="8.500" transform="rotate(-15 14 14)"/><ellipse cx="14" cy="14" rx="3.300" ry="8.500" transform="rotate(45 14 14)"/><ellipse cx="14" cy="14" rx="3.300" ry="8.500" transform="rotate(105 14 14)"/></g><circle cx="14" cy="14" r="1.500" fill="#fff"/></svg></a>
    <a href="#" title="Python Launcher"><svg viewBox="0 0 28 28"><path d="M14 0Q19 8 18 18H10Q9 8 14 0Z" fill="#9a9c9e" stroke="#5c5e60"/><path d="M10 16L8 26H11L13 22H15L17 26H20L18 16Z" fill="#68696b"/><path d="M11 10H16V14H12V17H10.500V12Z" fill="#3571a5"/><path d="M17.500 11V16H12.500V18.500H16L18 16Z" fill="#f3cf4a"/></svg></a>
    <a href="#" class="run" title="Acrobat"><svg viewBox="0 0 28 28"><path d="M2 2H26V25.500H2Z" fill="#321614" stroke="#e21b22" stroke-width="1.700"/><path d="M7 20Q14 15 14.500 7.500Q12.500 5.500 13 9Q15 16 21 16.500Q22 14.500 16 15.500Q8 17.500 7 20Z" fill="none" stroke="#fff" stroke-width="1.200"/></svg></a>
    <a href="#" class="run" title="PowerPoint"><svg viewBox="0 0 28 28"><path d="M2 4Q12 1 22 5Q29 10 25 15Q20 19 12 18V14Q22 15 21 11Q17 7 4 8Z" fill="#f2946a" stroke="#e27240"/><path d="M2 11Q8 8 13 13L9 25Q3 24 3 18Z" fill="#ec6b33"/><circle cx="8" cy="12" r="3.500" fill="#f3a37e"/></svg></a>
    <a href="#" class="run" title="Photo Booth"><svg viewBox="0 0 28 28"><rect x="0" y="0" width="28" height="28" rx="4" fill="#2e1a16"/><path d="M3 3H25V10H3Z" fill="#16121c"/><circle cx="9" cy="6" r="4" fill="#c9cfe8"/><circle cx="19" cy="6" r="4" fill="#c9cfe8"/><circle cx="9" cy="6" r="2" fill="#4157d8"/><circle cx="19" cy="6" r="2" fill="#4157d8"/><path d="M8 12H20M4 16L8 26M24 16L20 26" stroke="#876a60" stroke-width="2"/><circle cx="14" cy="19" r="6.500" fill="#57493d" stroke="#c4a986" stroke-width="1.500"/><path d="M12 15.500V22.500L18 19Z" fill="#ffe9a0"/></svg></a>
    <hr>
    <a href="#" title="Applications"><svg viewBox="0 0 28 28"><use href="#folder"/><path d="M10 21L15 11M14 10L19.500 21M8 17.500H21" stroke="#48a9d0" stroke-width="1.500"/></svg></a>
    <a href="#" title="Documents"><svg viewBox="0 0 28 28"><use href="#folder"/><path d="M10.500 9.500H16L19.500 13V21.500H10.500ZM16 9.500V13H19.500" fill="none" stroke="#48a9d0" stroke-width="1.200"/></svg></a>
    <a href="#" title="Downloads"><svg viewBox="0 0 28 28"><use href="#folder"/><circle cx="14.500" cy="15.500" r="6" fill="#48a9d0"/><path d="M14.500 11.500V18M11.500 16L14.500 19L17.500 16" fill="none" stroke="#72d2f5" stroke-width="1.800"/></svg></a>
    <a href="#" title="Window"><svg viewBox="0 0 28 28"><path d="M1 5H27V23H1Z" fill="#fff"/><path d="M2 6.500H12M2 9V20" stroke="#b3b3b3" stroke-dasharray="2 1"/><path d="M19 19H27V27H19Z" fill="#e9f2fb"/><path d="M19 19H24V27H19Z" fill="#1a92f5"/></svg></a>
    <a href="#" title="Trash"><svg viewBox="0 0 28 28"><path d="M4 3H24L21.500 26Q14 28 7 26Z" fill="#e3e4e6" stroke="#c5c7c9"/><path d="M9 5L10 25M14 5V26M19 5L18 25" stroke="#f5f5f6" stroke-width="1.500"/><ellipse cx="14" cy="3.500" rx="10" ry="2" fill="#f3f3f4" stroke="#c5c7c9"/></svg></a>
  </footer>
</div>
</body>
</html>
```
FILE: styles.css
```css
* { box-sizing: border-box; }
body {
  margin: 0;
  font-family: "Inter", "Noto Sans CJK TC", sans-serif;
  color: #222;
}
button { border: 0; padding: 0; background: none; font: inherit; }
a { color: inherit; text-decoration: none; }
ul { list-style: none; margin: 0; padding: 0; }
svg { display: block; flex: none; overflow: visible; }
.defs { position: absolute; width: 0; height: 0; }
.symbols { display: none; }
.glyph { font-family: "Liberation Sans", sans-serif; }
.mono { font-family: "Liberation Mono", monospace; }

.desktop {
  position: relative;
  min-height: 100vh;
  overflow: hidden;
  background: #080708;
}

/* menu bar */
.menubar {
  display: flex;
  justify-content: space-between;
  align-items: center;
  height: 23px;
  padding: 0 22px 0 21px;
  font-size: 14px;
  line-height: 20px;
  background: linear-gradient(90deg, #cdcdcd, #e6e3e3 30%, #f4f2f2 55%, #f4f2f2);
  border-bottom: 1px solid #151515;
}
.menus { display: flex; align-items: center; gap: 19px; }
.menus .app { font-weight: 700; }
.status { display: flex; align-items: center; }
.dropbox { margin-left: 7px; }
.tm { margin-left: 16px; }
.bt { margin-left: 20px; }
.net { margin-left: 15px; }
.wifi { margin-left: 9px; }
.vol { margin-left: 11px; }
.pct { margin-left: 10px; font-size: 12px; width: 26px; }
.bat { margin-left: 4px; }
.flag { margin-left: 15px; }
.ime { margin-left: 5px; font-size: 11px; }
.date { margin-left: 18px; }
.time { margin-left: 9px; }
.user { margin-left: 13px; }
.search { margin-left: 17px; }
.list { margin-left: 16px; }

/* windows behind the browser */
.back-left {
  position: absolute;
  top: 23px; left: 0; bottom: 45px;
  width: 127px;
  border-radius: 5px;
  background: linear-gradient(#e9e9e9 0 22px, #6a6a6a 22px 46px, #cfcfcf 46px 129px, #c2c2c2 129px 149px, #cfcfcf 149px 600px, #c4c4c4 705px, #d8d8d8);
}
.photo { position: absolute; left: 7px; bottom: 27px; width: 119px; height: 240px; }
.back-right {
  position: absolute;
  top: 23px; left: 167px; right: 0; bottom: 0;
  display: flex;
  flex-direction: column;
  align-items: flex-end;
  padding-top: 48px;
  font-size: 11px;
  line-height: 22px;
  background: linear-gradient(#f2f2f2 0 22px, #5a5a5a 22px 46px, #dadada 46px 234px, #858585 234px 235px, #dcdcdc 235px 293px, #9d9d9d 293px 294px, #e0e0e0 294px 674px, #a5a5a5 674px 675px, #f2f2f2 675px);
}
.back-mid {
  position: absolute;
  left: 126px; right: 384px; bottom: 41px;
  height: 60px;
  border-radius: 0 0 5px 5px;
  background: linear-gradient(90deg, transparent 136px, #c2c2c2 136px 137px, transparent 137px), #f2f2f2;
  box-shadow: 0 0 2px #777;
}

/* browser window */
.window {
  position: absolute;
  top: 23px; left: 9px; right: 6px; bottom: 88px;
  display: flex;
  flex-direction: column;
  border-radius: 5px;
  overflow: hidden;
  box-shadow: 0 16px 36px rgba(0, 0, 0, .6), 0 0 1px #444;
  background: #14181c;
}
.tabstrip {
  display: flex;
  align-items: flex-start;
  height: 37px;
  padding-left: 12px;
  background: linear-gradient(#dadada, #d0d0d0);
  border-bottom: 1px solid #929292;
}
.lights { display: flex; gap: 8px; padding-top: 13px; width: 61px; }
.lights button { width: 12px; height: 12px; border-radius: 50%; }
.red { background: #fc5650; }
.amber { background: #fdbb40; }
.green { background: #08c851; }
.tabs { display: flex; flex: none; padding-top: 8px; }
.tab {
  position: relative;
  display: flex;
  align-items: flex-start;
  width: 35px; height: 29px;
  padding: 7px 0 0 15px;
}
.shape { position: absolute; left: 0; top: 0; width: 47px; height: 30px; fill: #d0d0d0; }
.active .shape { fill: #f2f2f2; }
.active { gap: 1px; z-index: 1; }
.cut { position: relative; font-size: 11px; line-height: 14px; color: #8a7a3a; }
.x { position: relative; width: 8px; height: 8px; margin-top: 4px; }
.fav { position: relative; width: 16px; height: 16px; }
.newtab { flex: none; margin: 16px 0 0 9px; }
.profile { flex: none; margin-left: auto; padding: 12px 11px 0 0; font-size: 12px; line-height: 16px; }

.toolbar {
  display: flex;
  align-items: center;
  gap: 12px;
  height: 36px;
  padding: 0 16px 0 10px;
  background: #f2f2f2;
}
.omnibox {
  display: flex;
  align-items: center;
  flex: 1;
  height: 28px;
  margin-left: -2px;
  padding: 0 7px 0 9px;
  border: 1px solid #b3b3b3;
  border-radius: 3px;
  background: #fff;
  font-size: 14px;
}
.secure { margin-left: 7px; padding-right: 7px; border-right: 1px solid #bbb; font-size: 13px; line-height: 18px; color: #0b8043; }
.origin { margin-left: 6px; color: #000; }
.scheme { color: #0b8043; }
.sep { color: #777; }
.omnibox input { flex: 1; min-width: 0; border: 0; padding: 0; outline: 0; background: none; font: inherit; color: #777; }
.mag { margin-right: 12px; }
.ext { margin-left: -1px; }
.kebab { margin-left: 6px; }

.bookmarks {
  display: flex;
  align-items: center;
  gap: 14px;
  height: 24px;
  padding: 0 9px 4px 13px;
  border-bottom: 1px solid #c9c9c9;
  background: #f2f2f2;
  color: #000;
  font-size: 12px;
  line-height: 16px;
  white-space: nowrap;
}
.bm { display: flex; align-items: center; gap: 4px; }
.apps { gap: 6px; }
.more { margin-left: auto; font-size: 15px; color: #555; }
.other { margin-left: -4px; }

/* lecture video */
.page { flex: 1; min-height: 0; display: flex; justify-content: center; }
.video {
  position: relative;
  height: 100%;
  aspect-ratio: 1053 / 592;
  padding-top: 23px;
  background:
    radial-gradient(circle at 75% 35%, rgba(50, 124, 172, .25), transparent 30%),
    radial-gradient(circle at 20% 60%, rgba(50, 124, 172, .25), transparent 35%),
    #3b83aa;
  color: #fff;
  font-family: "Lato", sans-serif;
}
.slide {
  display: flex;
  gap: 15px;
  font-size: 36px;
  font-weight: 900;
  font-variant-ligatures: none;
  line-height: 40px;
  text-shadow: 0 0 1px #fff;
}
.verbs {
  display: flex;
  flex-direction: column;
  justify-content: space-between;
  width: 27%;
  padding-right: 1px;
  text-align: right;
}
.objects li { height: 42px; }
.objects .tight { height: 40px; }
.objects .loose { height: 45px; }
.mark {
  position: absolute;
  right: 9px; bottom: 7px;
  font-size: 21px;
  font-weight: 400;
  line-height: 26px;
  color: #83b3cd;
}

/* dock */
.dock {
  position: absolute;
  left: 22px; right: 22px; bottom: 0;
  display: flex;
  height: 40px;
  padding: 4px 2px 0 4px;
  border-radius: 5px 5px 0 0;
  background: linear-gradient(90deg, #5a5357, #8d8587 9%, #e4e0e2 22%, #efeff0 30%);
  box-shadow: 0 0 1px 1px rgba(150, 150, 150, .5);
}
.dock a { position: relative; flex: 1; display: flex; flex-direction: column; align-items: center; }
.dock svg { width: 28px; height: 28px; }
.run::after { content: ""; width: 3px; height: 3px; margin-top: 3px; border-radius: 50%; background: #333; }
.dock hr { width: 1px; height: 30px; margin: 1px 6px 0 7px; border: 0; background: #bbb; }
.badge {
  position: absolute;
  top: 0; right: 0;
  width: 11px; height: 11px;
  border-radius: 50%;
  background: #f5413f;
  color: #fff;
  font-size: 8px;
  line-height: 11px;
  text-align: center;
}
```
